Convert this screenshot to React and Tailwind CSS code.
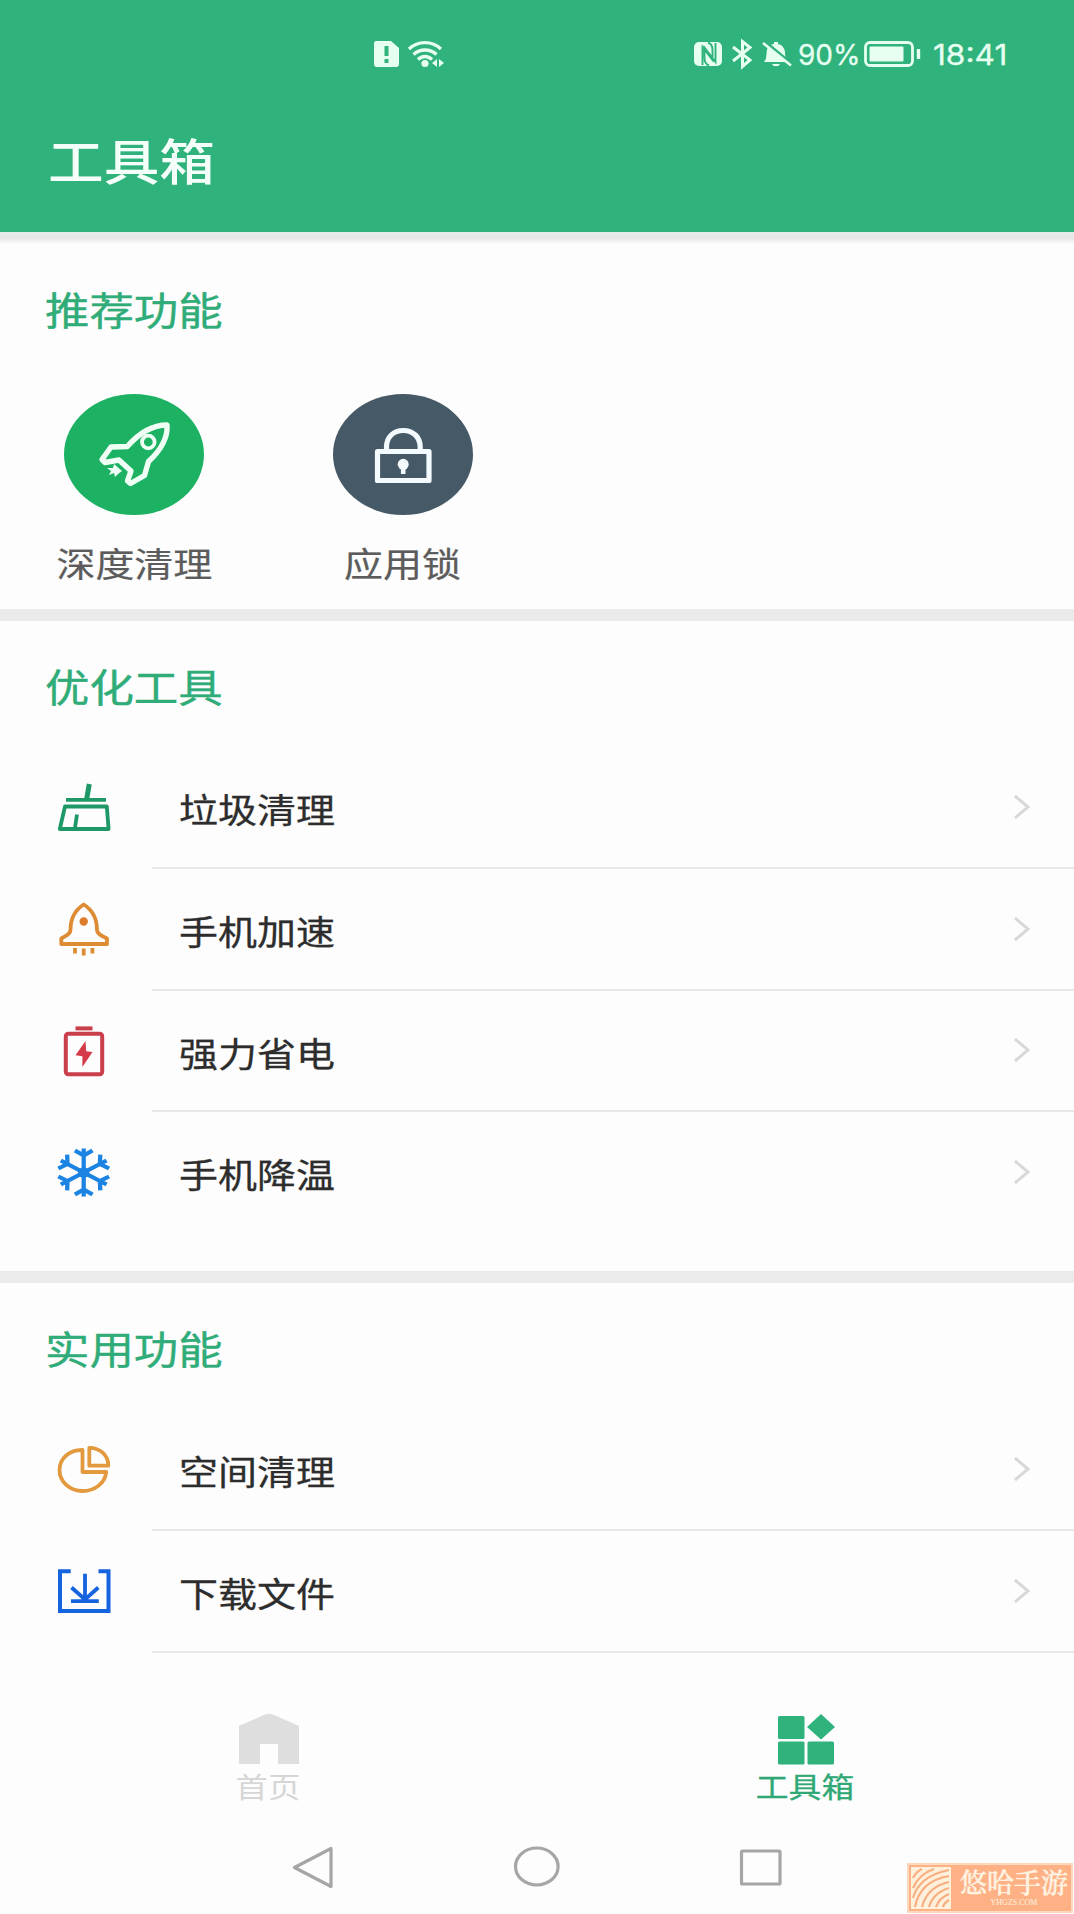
import React from "react";

const CJK = "font-['Noto_Sans_CJK_SC',sans-serif]";

function Wide({ className = "", children }) {
  return (
    <span className={`inline-block whitespace-nowrap leading-none ${CJK} ${className}`}>{children}</span>
  );
}

function SectionTitle({ children }) {
  return (
    <h2 className="flex h-[126px] items-center pl-[45px] pt-[2px]">
      <Wide className="origin-left scale-x-[1.157] text-[38.4px] text-[#2fac78] [-webkit-text-stroke:0.4px_#2fac78]">
        {children}
      </Wide>
    </h2>
  );
}

function Divider() {
  return <div className="h-[12px] shrink-0 bg-[#ebebeb]" />;
}

function RowIcon({ color, children }) {
  return (
    <svg
      className="-mt-px size-[56px] shrink-0"
      viewBox="0 0 56 56"
      fill="none"
      stroke={color}
      strokeWidth="3.8"
      strokeLinejoin="round"
    >
      {children}
    </svg>
  );
}

const BroomIcon = () => (
  <RowIcon color="#1f9868">
    <path d="M33.3 5L30.7 20" strokeWidth="5" />
    <path d="M10 20.8H50" />
    <path d="M9 27.5H50.8L52.6 50H3.8Z" />
    <path d="M21 35.5L18.8 50" />
  </RowIcon>
);

const RocketIcon = () => (
  <RowIcon color="#dd8c33">
    <path d="M27.700 3.500C19 9 14.500 17 14.500 29C14.500 32 12 34 5.300 37.500V43H51V37.500C43.500 34 41 32 41 29C41 17 36.500 9 27.700 3.500Z" />
    <circle cx="27.7" cy="20.5" r="4.2" fill="#dd7c2c" stroke="none" />
    <path d="M19 47V52.5M27.7 47.5V54.5M36.4 47V52.5" strokeWidth="3.8" />
  </RowIcon>
);

const BatteryIcon = () => (
  <RowIcon color="#c93f4b">
    <path d="M19.5 5.4H36.5" strokeWidth="4" />
    <rect x="9.8" y="10.8" width="36.4" height="40.5" rx="2.5" strokeWidth="4" />
    <path d="M29.5 18L19.5 32.3L26.4 33.3V44L36.5 29L30.2 28.3Z" fill="#d43a48" stroke="none" />
  </RowIcon>
);

const SnowIcon = () => (
  <RowIcon color="#1b83e2">
    <g transform="translate(27.7 27.5) scale(1.1 1)">
      {[0, 60, 120, 180, 240, 300].map((a) => (
        <g key={a} transform={`rotate(${a})`}>
          <path d="M0 0V-24M-8 -22L0 -17L8 -22" strokeWidth="3.9" />
        </g>
      ))}
      <circle r="5.2" fill="#1b83e2" stroke="none" />
    </g>
  </RowIcon>
);

const PieIcon = () => (
  <RowIcon color="#e39a3e">
    <path d="M26.5 9C13.5 8.6 3.5 17.5 3.5 29C3.5 40.7 13.8 50 26.5 50C39 50 49.2 42 50.2 31H26.5Z" />
    <path d="M33.3 6.8V24.7H52.3C52.3 14.5 44.5 6.8 33.3 6.8Z" />
  </RowIcon>
);

const DownloadIcon = () => (
  <RowIcon color="#1663e0">
    <g strokeLinejoin="miter">
      <path d="M14.7 8.2H4V48H52.5V8.2H42.5" strokeWidth="4" />
      <path d="M29 10.8V36.5M15.5 24.5L29 36.5L42.3 24.5M15 38.2H42.8" />
    </g>
  </RowIcon>
);

function Row({ icon: Icon, label, line = true }) {
  return (
    <div className="flex h-[121.8px] pl-[56px]">
      <div className="flex items-center">
        <Icon />
      </div>
      <div
        className={`ml-[40px] flex flex-1 items-center justify-between border-b-2 pl-[27px] pr-[43px] ${
          line ? "border-[#e8e8e8]" : "border-transparent"
        }`}
      >
        <Wide className="origin-left scale-x-[1.157] pt-[4px] text-[33.7px] text-[#2d2d2d] [-webkit-text-stroke:0.3px_#2d2d2d]">
          {label}
        </Wide>
        <svg className="h-[26px] w-[18px]" viewBox="0 0 18 26" fill="none" stroke="#d8d8d8" strokeWidth="3">
          <path d="M2 2L15 13L2 24" />
        </svg>
      </div>
    </div>
  );
}

function Feature({ label, children }) {
  return (
    <div className="flex w-[268.5px] flex-col items-center">
      <svg className="h-[121px] w-[140px]" viewBox="0 0 140 121" fill="none">
        {children}
      </svg>
      <Wide className="mt-[31px] scale-x-[1.157] text-[33.7px] text-[#5c5c5c] [-webkit-text-stroke:0.2px_#5c5c5c]">
        {label}
      </Wide>
    </div>
  );
}

function StatusBar() {
  return (
    <div className="flex h-[108px] items-center text-[#e6fff1]">
      <svg className="ml-[372px] h-[30px] w-[74px]" viewBox="0 0 74 30" fill="none">
        <path d="M4 2H19L27 9V25Q27 28 24 28H5Q2 28 2 25V5Q2 2 4 2Z" fill="#e6fff1" />
        <path d="M14.5 7V17M14.5 20V24" stroke="#2fb27b" strokeWidth="4" />
        <g stroke="#e6fff1" strokeWidth="3.4">
          <path d="M37 10C46 1.5 60 1.5 69 10" />
          <path d="M41.5 15.5C48 9.5 58 9.5 64.5 15.5" />
          <path d="M46 20.5C50 16.5 56 16.5 60 20.5" />
        </g>
        <circle cx="53" cy="24.500" r="3.600" fill="#e6fff1" />
        <path d="M60 24L65 20V28ZM72 24L67 20V28Z" fill="#e6fff1" />
      </svg>
      <svg className="ml-[247px] h-[32px] w-[100px]" viewBox="0 0 100 32" fill="none">
        <rect x="1" y="4" width="28" height="24" rx="5" fill="#e6fff1" />
        <path
          d="M9.500 27V9L19.500 22V12C19.500 8 18 5.500 15 4.500M22.500 5V24L11.500 9.500V20C11.500 24 13 26.500 16 27.500"
          stroke="#2fb27b"
          strokeWidth="1.900"
        />
        <path d="M40 9L57 22L49.500 28.500V3.500L57 9.500L40 23" stroke="#e6fff1" strokeWidth="3" />
        <path
          d="M71 24C74 21 73 17 74 12C75 8 79 6 81 6V4H85V6C90 7 92 11 92 15C92 19 93 22 96 24ZM79 26H87C86 29 80 29 79 26Z"
          fill="#e6fff1"
        />
        <path d="M71 3L100 27" stroke="#2fb27b" strokeWidth="3" />
        <path d="M70 5L98 27.500" stroke="#e6fff1" strokeWidth="2.600" />
      </svg>
      <span className="ml-[5px] mt-[2px] w-[66px] whitespace-nowrap font-['Inter',sans-serif] text-[28px] leading-none [-webkit-text-stroke:0.3px_#e6fff1]">
        90%
      </span>
      <svg className="h-[28px] w-[57px]" viewBox="0 0 57 28" fill="none">
        <rect x="1.500" y="2.500" width="47" height="23" rx="4.500" stroke="#e6fff1" strokeWidth="2.800" />
        <rect x="5.500" y="6.500" width="34" height="15" rx="1" fill="#e6fff1" />
        <path d="M54.500 9V19" stroke="#e6fff1" strokeWidth="3.400" />
      </svg>
      <span className="ml-[12px] mt-[2px] origin-left scale-x-[1.13] whitespace-nowrap font-['Inter',sans-serif] text-[28px] leading-none [-webkit-text-stroke:0.3px_#e6fff1]">
        18:41
      </span>
    </div>
  );
}

export default function App() {
  return (
    <div className={`flex h-[1914px] w-[1074px] flex-col overflow-hidden bg-[#fdfdfd] ${CJK}`}>
      <header className="h-[232px] shrink-0 bg-[#2fb27b]">
        <StatusBar />
        <h1 className="flex h-[102px] items-center pl-[48px]">
          <Wide className="origin-left scale-x-[1.15] text-[48.4px] font-medium text-[#f4fff9]">工具箱</Wide>
        </h1>
      </header>
      <div className="h-[12px] shrink-0 bg-linear-to-b from-[#e3efe9] via-[#e8e6e8] to-[#fdfdfd]" />

      <section className="h-[365px] shrink-0">
        <SectionTitle>推荐功能</SectionTitle>
        <div className="mt-[24px] flex">
          <Feature label="深度清理">
            <ellipse cx="70" cy="60.500" rx="70" ry="60.500" fill="#1db263" />
            <path
              d="M103 31C88 31 76 38 63.300 52.500L47 53L38 65.500L41 68.500L55 66L67 77L63.500 87L66.500 89.500L80.500 81.500L84.500 67.500C97 56 104 45 103 31Z"
              stroke="#effff5"
              strokeWidth="5.400"
              strokeLinejoin="round"
            />
            <circle cx="84.300" cy="48" r="6.300" stroke="#effff5" strokeWidth="3.800" />
            <path d="M50 70L58 77L54 80L51 83L50 79L45 81L47 77L43 74L49 74Z" fill="#effff5" />
          </Feature>
          <Feature label="应用锁">
            <ellipse cx="70" cy="60.500" rx="70" ry="60.500" fill="#465966" />
            <g stroke="#f4fbff" strokeWidth="5.200">
              <rect x="44.500" y="57.500" width="51.500" height="29" strokeLinejoin="round" />
              <path d="M53.500 57V53C53.500 43 60.500 36.500 70.300 36.500C80 36.500 87.200 43 87.200 53V57" />
            </g>
            <circle cx="70.200" cy="70.300" r="5.500" fill="#f4fbff" />
            <path d="M70.200 71V80" stroke="#f4fbff" strokeWidth="4.600" />
          </Feature>
        </div>
      </section>
      <Divider />

      <section className="h-[650px] shrink-0">
        <SectionTitle>优化工具</SectionTitle>
        <Row icon={BroomIcon} label="垃圾清理" />
        <Row icon={RocketIcon} label="手机加速" />
        <Row icon={BatteryIcon} label="强力省电" />
        <Row icon={SnowIcon} label="手机降温" line={false} />
      </section>
      <Divider />

      <section className="h-[370px] shrink-0">
        <SectionTitle>实用功能</SectionTitle>
        <Row icon={PieIcon} label="空间清理" />
        <Row icon={DownloadIcon} label="下载文件" />
      </section>

      <nav className="flex h-[172px] shrink-0 pt-[60px]">
        <div className="flex flex-1 flex-col items-center">
          <svg className="h-[52px] w-[60px]" viewBox="0 0 60 52" fill="#dedede">
            <path d="M0 13L26 1.500Q30 0 34 1.500L60 13V51H39V31H21V51H0Z" />
          </svg>
          <Wide className="mt-[7px] scale-x-[1.157] text-[28px] text-[#d6d6d6]">首页</Wide>
        </div>
        <div className="flex flex-1 flex-col items-center">
          <svg className="h-[52px] w-[60px]" viewBox="0 0 60 52" fill="#2fb27b">
            <rect x="2" y="3" width="26.500" height="23" rx="1.500" />
            <path d="M45 1L59 14L45 26.500L31 14Z" />
            <rect x="2" y="28.500" width="26.500" height="23" rx="1.500" />
            <rect x="31.500" y="28.500" width="26.500" height="23" rx="1.500" />
          </svg>
          <Wide className="mt-[7px] scale-x-[1.17] text-[28px] text-[#2fa876] [-webkit-text-stroke:0.3px_#2fa876]">
            工具箱
          </Wide>
        </div>
      </nav>

      <footer className="flex h-[89px] shrink-0 pt-[17px]">
        <svg
          className="ml-[290px] mt-[3px] h-[46px] w-[500px]"
          viewBox="0 0 500 46"
          fill="none"
          stroke="#a6a6a6"
          strokeWidth="3.200"
          strokeLinejoin="round"
        >
          <path d="M4.500 22.500L41 3.500V41.500Z" />
          <ellipse cx="246.800" cy="21.500" rx="21.300" ry="18.500" />
          <rect x="451.500" y="6" width="38.500" height="33" rx="1" />
        </svg>
        <div className="ml-[117px] mt-[21px] flex h-[50px] w-[166px] shrink-0 border-2 border-[#ffd9bd] bg-[#fdb184] p-[2px]">
          <svg className="h-[42px] w-[40px] shrink-0" viewBox="0 0 40 42" fill="none">
            <rect width="40" height="42" fill="#fff0dc" />
            <g stroke="#f9ae80" strokeWidth="2.200">
              <path d="M2 11Q5 5 11 2" />
              <path d="M2 21Q8 7 23 2" />
              <path d="M2 31Q8 9 38 3" />
              <path d="M4 40Q9 14 38 9" />
              <path d="M11 40Q16 20 38 15" />
              <path d="M18 40Q22 26 38 21" />
              <path d="M25 40Q28 31 38 27" />
              <path d="M32 40Q33 36 38 33" />
            </g>
          </svg>
          <div className="flex flex-1 flex-col items-center pl-[8px] text-[#fff3e3]">
            <span className="whitespace-nowrap font-['Noto_Serif_CJK_SC','Noto_Sans_CJK_SC',serif] text-[27px] font-medium leading-[30px] [-webkit-text-stroke:0.5px_#fff3e3]">
              悠哈手游
            </span>
            <span className="mt-px font-['Liberation_Serif',serif] text-[8px] leading-[10px]">YHGZS.COM</span>
          </div>
        </div>
      </footer>
    </div>
  );
}
